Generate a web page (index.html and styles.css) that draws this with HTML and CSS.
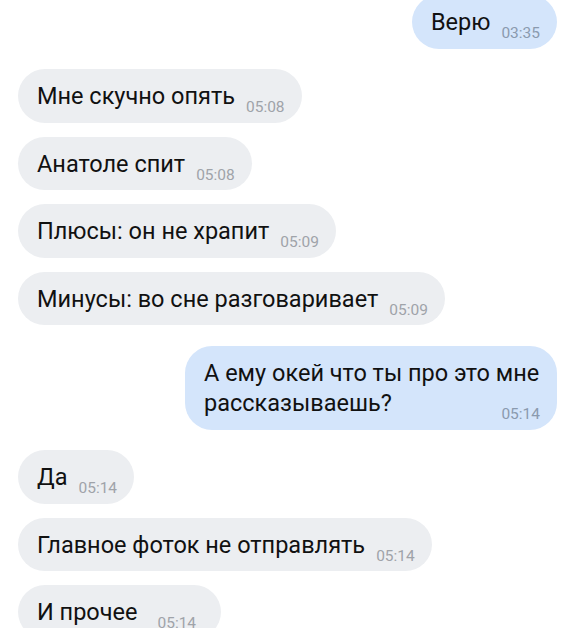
FILE: index.html
```html
<!DOCTYPE html>
<html lang="ru">
<head>
<meta charset="UTF-8">
<meta name="viewport" content="width=device-width, initial-scale=1.0">
<title>Чат</title>
<link rel="stylesheet" href="styles.css">
</head>
<body>
<main class="chat">
  <div class="msg out"><span class="text">Верю</span><span class="time">03:35</span></div>
  <div class="msg in"><span class="text">Мне скучно опять</span><span class="time">05:08</span></div>
  <div class="msg in"><span class="text">Анатоле спит</span><span class="time">05:08</span></div>
  <div class="msg in"><span class="text">Плюсы: он не храпит</span><span class="time">05:09</span></div>
  <div class="msg in"><span class="text">Минусы: во сне разговаривает</span><span class="time">05:09</span></div>
  <div class="msg out long"><span class="text">А ему окей что ты про это мне рассказываешь?</span><span class="time">05:14</span></div>
  <div class="msg in"><span class="text">Да</span><span class="time">05:14</span></div>
  <div class="msg in"><span class="text">Главное фоток не отправлять</span><span class="time">05:14</span></div>
  <div class="msg in loose"><span class="text">И прочее</span><span class="time">05:14</span></div>
</main>
</body>
</html>
```

FILE: styles.css
```css
body {
  margin: 0;
  background: #fff;
  font-family: Roboto, "Noto Sans", sans-serif;
  color: #111;
}
.chat {
  display: flex;
  flex-direction: column;
  align-items: flex-start;
  margin-top: -5px;
  padding: 0 19px 0 18px;
}
.msg {
  box-sizing: border-box;
  margin-top: 14px;
  padding: 12px 17px 11.5px 19px;
  border-radius: 27px;
  background: #eceef1;
  font-size: 23.5px;
  line-height: 30px;
  white-space: nowrap;
}
.msg:first-child {
  margin-top: 0;
}
.msg.in + .msg.out,
.msg.out + .msg.in {
  margin-top: 20.5px;
}
.msg.out {
  align-self: flex-end;
  background: #d4e5fb;
}
.time {
  margin-left: 11px;
  font-size: 15.5px;
  line-height: 0;
  vertical-align: -8px;
  color: #9fa3a9;
}
.msg.out .time {
  color: #8a9aae;
}
.msg.long {
  max-width: 372px;
  padding-bottom: 16px;
  white-space: normal;
}
.msg.long .time {
  display: block;
  margin-top: -4px;
  text-align: right;
  vertical-align: baseline;
}
.msg.loose {
  padding-right: 25px;
}
.msg.loose .time {
  margin-left: 20px;
}
```
